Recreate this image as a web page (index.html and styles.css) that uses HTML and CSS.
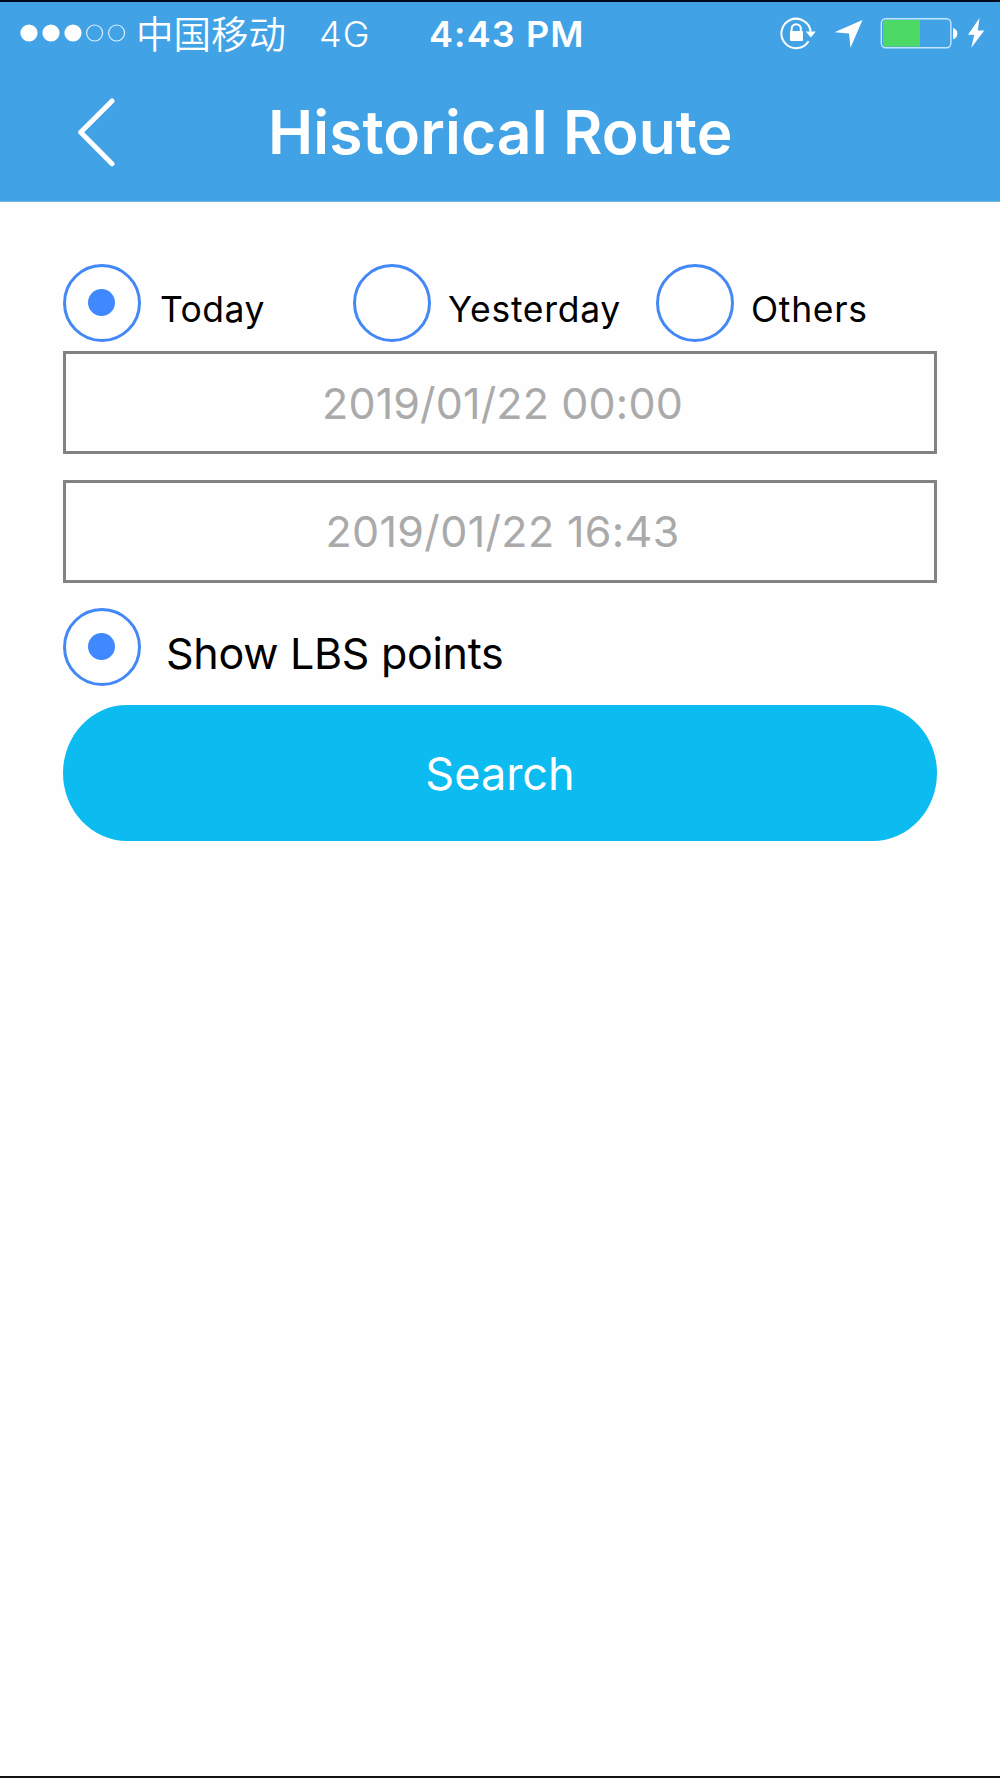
FILE: index.html
```html
<!DOCTYPE html>
<html lang="en">
<head>
<meta charset="utf-8">
<title>Historical Route</title>
<link rel="stylesheet" href="styles.css">
</head>
<body>
<div class="screen">
  <header class="header">
    <div class="status">
      <svg class="signal" width="106" height="20" viewBox="0 0 106 20">
        <g fill="#fff"><circle cx="9" cy="10" r="8.6"/><circle cx="31" cy="10" r="8.6"/><circle cx="53" cy="10" r="8.6"/></g>
        <g fill="none" stroke="#d9efff" stroke-width="1.2"><circle cx="74.6" cy="10" r="8"/><circle cx="96.6" cy="10" r="8"/></g>
      </svg>
      <span class="carrier" lang="zh">中国移动</span>
      <span class="network">4G</span>
      <span class="clock">4:43 PM</span>
      <svg class="indicators" width="206" height="34" viewBox="780 16 206 34">
        <path d="M808.6 41.2A14.7 14.7 0 1 1 810.7 31.5" fill="none" stroke="#fff" stroke-width="2"/>
        <path d="M805.8 31.5h10l-5 6z" fill="#fff"/>
        <path d="M791.6 33v-4.2a4.6 4.6 0 0 1 9.2 0V33" fill="none" stroke="#fff" stroke-width="2"/>
        <rect x="790" y="31" width="13" height="10" rx="1" fill="#fff"/>
        <path d="M862.5 20 850.5 47.8 849 33.6 834.5 32.2z" fill="#fff"/>
        <rect x="881.3" y="18.8" width="69.6" height="29" rx="4.5" fill="none" stroke="#c4e7ff" stroke-width="1.4"/>
        <path d="M920 20v26.4h-34q-3-.2-3-3V23q0-3 3-3z" fill="#4cd964"/>
        <path d="M953 28q4.300 1 4.300 5.600T953 39.200z" fill="#fff"/>
        <path d="M979.500 18 968 34.800h6.200L971.300 47.800 984.300 30.400h-6.500z" fill="#fff"/>
      </svg>
    </div>
    <div class="nav">
      <svg class="back" width="40" height="70" viewBox="0 0 40 70"><path d="M36 3 4.700 34.300 36 65.700" fill="none" stroke="#fff" stroke-width="5" stroke-linecap="round" stroke-linejoin="round"/></svg>
      <h1 class="title">Historical Route</h1>
    </div>
  </header>
  <main class="content">
    <div class="ranges">
      <label class="option"><span class="radio on"></span><span class="option-text today">Today</span></label>
      <label class="option"><span class="radio"></span><span class="option-text">Yesterday</span></label>
      <label class="option"><span class="radio"></span><span class="option-text">Others</span></label>
    </div>
    <div class="date from"><span>2019/01/22 00:00</span></div>
    <div class="date to"><span>2019/01/22 16:43</span></div>
    <label class="option lbs"><span class="radio on"></span><span class="lbs-text">Show LBS points</span></label>
    <button class="search" type="button"><span>Search</span></button>
  </main>
</div>
</body>
</html>
```
FILE: styles.css
```css
* { box-sizing: border-box; }
body { margin: 0; background: #fefefe; font-family: Inter, "Noto Sans CJK SC", sans-serif; color: #000; }
.screen { height: 1778px; border-top: 2px solid #03081b; border-bottom: 2px solid #111; }
.header { height: 200px; background: #42a2e6; border-bottom: 1px solid #75b5e2; color: #fff; }
.status { display: flex; align-items: center; height: 62px; padding-left: 20px; white-space: nowrap; }
.signal { width: 106px; flex: none; }
.carrier { width: 185px; padding: 0 0 2px 10px; font: 350 37.500px/60px "Noto Sans CJK SC", sans-serif; }
.network { width: 118px; padding: 2px 0 0 8px; font-size: 36px; font-weight: 300; line-height: 64px; letter-spacing: 1px; }
.clock { width: 351px; padding-top: 2px; font-size: 36px; font-weight: 600; line-height: 64px; letter-spacing: 1.100px; }
.indicators { flex: none; }
.nav { display: flex; align-items: center; height: 138px; padding-left: 76px; }
.back { flex: none; }
.title { margin: 0 0 2px 152px; font-size: 60.500px; font-weight: 600; line-height: 72px; letter-spacing: .1px; white-space: nowrap; }
.content { padding: 61px 63px 0; }
.ranges { display: grid; grid-template-columns: 290px 303px 1fr; height: 88px; }
.option { display: flex; align-items: center; height: 79px; white-space: nowrap; }
.radio { display: flex; flex: none; align-items: center; justify-content: center; width: 78px; height: 78px; border: 3px solid #4388f5; border-radius: 50%; }
.radio.on::after { content: ""; width: 27px; height: 27px; margin: 0 2px 1px 0; border-radius: 50%; background: #4088ff; }
.option-text { margin-left: 17px; padding-top: 15px; font-size: 35.500px; line-height: 44px; letter-spacing: .7px; }
.option-text.today { margin-left: 19px; letter-spacing: .45px; }
.date { display: flex; align-items: center; justify-content: center; height: 103px; margin-bottom: 26px; padding-left: 5px; border: 3px solid #828282; color: #aaa; font-size: 43px; letter-spacing: .15px; white-space: nowrap; }
.date.to { padding-bottom: 2px; letter-spacing: .35px; }
.lbs { margin-top: -2px; }
.lbs-text { margin-left: 25px; padding-top: 13px; font-size: 43px; line-height: 52px; letter-spacing: -.28px; }
.search { display: flex; align-items: center; justify-content: center; width: 874px; height: 136px; margin-top: 19px; padding: 2px 0 0; border: 0; border-radius: 64px / 68px; background: #0cbbf0; color: #fff; font: 400 45px/54px Inter, sans-serif; }
```
